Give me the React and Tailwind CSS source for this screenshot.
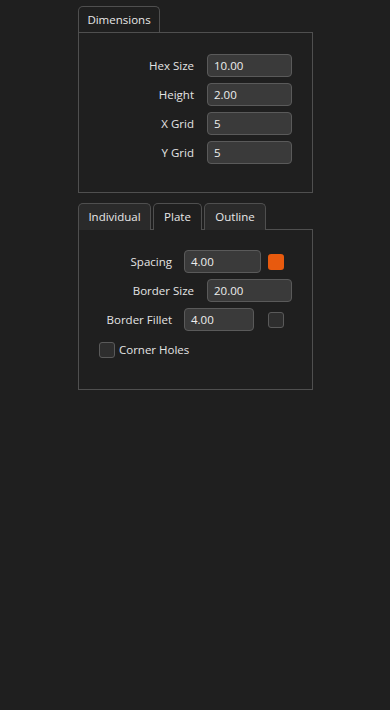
import React from 'react';

const font = { fontFamily: '"Open Sans", "Noto Sans", sans-serif' };

const Field = ({ value, width }) => (
    <div
        className={`h-[23px] ${width} rounded-[4px] border border-[#5a5a5a] bg-[#3a3a3a] px-[6px] flex items-center text-[11.5px] text-[#eeeeee]`}
    >
        {value}
    </div>
);

const Tab = ({ label, active, width, height }) => (
    <div
        className={`${height} ${width} rounded-t-[5px] border border-b-0 border-[#4f4f4f] flex items-center justify-center text-[11.5px] text-[#e8e8e8] ${active ? 'bg-[#1f1f1f]' : 'bg-[#2a2a2a]'}`}
    >
        {label}
    </div>
);

const App = () => {
    return (
        <div className="w-[390px] h-[710px] bg-[#1f1f1f] overflow-hidden" style={font}>
            <div className="pl-[78px] pt-[6px] w-[313px]">
                {/* Dimensions */}
                <div className="flex">
                    <Tab label="Dimensions" active width="w-[82px]" height="h-[26px]" />
                </div>
                <div className="h-[161px] border border-[#4f4f4f] pt-[21px]">
                    <div className="flex flex-col gap-[6px]">
                        {[
                            ['Hex Size', '10.00'],
                            ['Height', '2.00'],
                            ['X Grid', '5'],
                            ['Y Grid', '5'],
                        ].map(([label, value]) => (
                            <div key={label} className="flex items-center">
                                <div className="w-[115px] text-right text-[11.5px] text-[#e4e4e4]">{label}</div>
                                <div className="ml-[13px]">
                                    <Field value={value} width="w-[85px]" />
                                </div>
                            </div>
                        ))}
                    </div>
                </div>

                {/* Individual / Plate / Outline */}
                <div className="mt-[10px] flex gap-[2px]">
                    <Tab label="Individual" width="w-[73px]" height="h-[27px]" />
                    <Tab label="Plate" active width="w-[49px]" height="h-[27px]" />
                    <Tab label="Outline" width="w-[62px]" height="h-[27px]" />
                </div>
                <div className="h-[161px] -mt-px border border-[#4f4f4f] pt-[20px]">
                    <div className="flex flex-col gap-[6px]">
                        <div className="flex items-center">
                            <div className="w-[93px] text-right text-[11.5px] text-[#e4e4e4]">Spacing</div>
                            <div className="ml-[12px]">
                                <Field value="4.00" width="w-[77px]" />
                            </div>
                            <div className="ml-[7px] w-[16px] h-[16px] rounded-[3px] bg-[#e85a0e]" />
                        </div>
                        <div className="flex items-center">
                            <div className="w-[115px] text-right text-[11.5px] text-[#e4e4e4]">Border Size</div>
                            <div className="ml-[13px]">
                                <Field value="20.00" width="w-[85px]" />
                            </div>
                        </div>
                        <div className="flex items-center">
                            <div className="w-[93px] text-right text-[11.5px] text-[#e4e4e4]">Border Fillet</div>
                            <div className="ml-[12px]">
                                <Field value="4.00" width="w-[70px]" />
                            </div>
                            <div className="ml-[14px] w-[16px] h-[16px] rounded-[3px] border border-[#5a5a5a] bg-[#2e2e2e]" />
                        </div>
                    </div>
                    <div className="mt-[10px] ml-[20px] flex items-center gap-[4px]">
                        <div className="w-[16px] h-[16px] rounded-[3px] border border-[#5a5a5a] bg-[#2e2e2e]" />
                        <span className="text-[11.5px] text-[#e4e4e4]">Corner Holes</span>
                    </div>
                </div>
            </div>
        </div>
    );
};

export default App;
